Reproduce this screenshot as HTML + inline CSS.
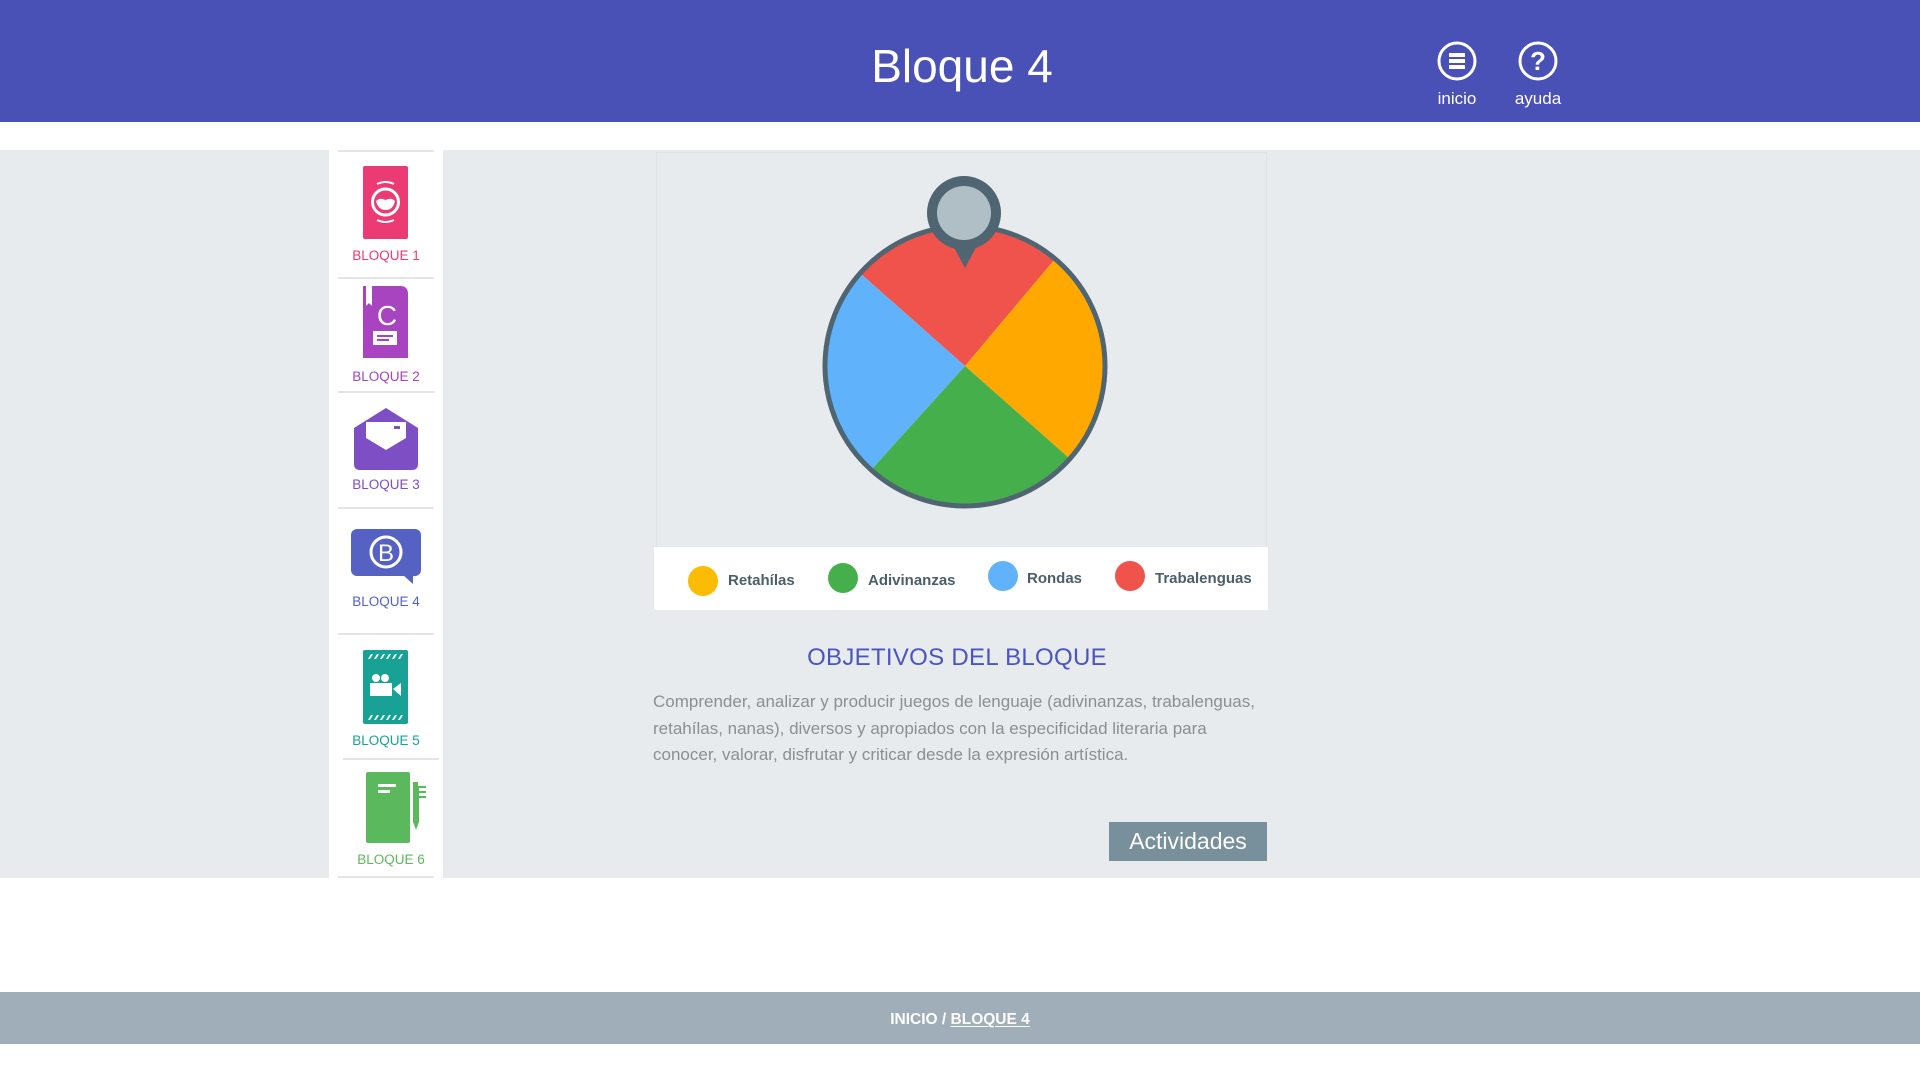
<!DOCTYPE html>
<html><head><meta charset="utf-8">
<style>
*{margin:0;padding:0;box-sizing:border-box}
body{width:1920px;height:1080px;background:#fff;font-family:"Liberation Sans",sans-serif;position:relative;overflow:hidden}
.hdr{position:absolute;left:0;top:0;width:1920px;height:122px;background:#4950b6}
.title{position:absolute;left:0;width:1920px;top:38px;text-align:center;color:#fff;font-size:46px;line-height:56px;padding-left:4px}
.hi{position:absolute;top:40px;width:80px;text-align:center;color:#fff;font-size:17px}
.hi svg{display:block;margin:0 auto 7px}
.main{position:absolute;left:0;top:150px;width:1920px;height:728px;background:#e8ebee}
.side{position:absolute;left:329px;top:150px;width:114px;height:728px;background:#fff}
.sep{position:absolute;left:9px;width:96px;height:2px;background:#e3e6e9}
.lab{position:absolute;left:0;width:114px;text-align:center;font-size:13.5px;line-height:16px}
.ic{position:absolute}
.chart{position:absolute;left:656px;top:152px;width:611px;height:396px;border:1px solid #dfe3e6;background:#e8ebee}
.leg{position:absolute;left:654px;top:547px;width:614px;height:63px;background:#fff}
.dot{position:absolute;width:30px;height:30px;border-radius:50%;top:16px}
.lt{position:absolute;top:25px;font-size:15px;font-weight:bold;color:#4c5e69}
h2{position:absolute;left:653px;width:608px;top:644px;text-align:center;font-weight:normal;color:#4a55be;font-size:24px;letter-spacing:0.3px}
.p{position:absolute;left:653px;top:689px;color:#8c8f92;font-size:17px;line-height:26.5px;white-space:nowrap}
.btn{position:absolute;left:1109px;top:822px;width:158px;height:39px;background:#78909c;color:#fff;font-size:23px;line-height:39px;text-align:center}
.ftr{position:absolute;left:0;top:992px;width:1920px;height:52px;background:#a0aeb9;color:#fff;font-size:15.5px;font-weight:bold;text-align:center;line-height:56px}
.ftr u{text-underline-offset:2px}
</style></head><body>
<div class="hdr">
<div class="title">Bloque 4</div>
<div class="hi" style="left:1417px"><svg width="42" height="42" viewBox="0 0 42 42"><circle cx="21" cy="21" r="18" fill="none" stroke="#fff" stroke-width="3"/><rect x="13" y="13" width="16" height="4" fill="#fff"/><rect x="13" y="19" width="16" height="4" fill="#fff"/><rect x="13" y="25" width="16" height="4" fill="#fff"/></svg>inicio</div>
<div class="hi" style="left:1498px"><svg width="42" height="42" viewBox="0 0 42 42"><circle cx="21" cy="21" r="18" fill="none" stroke="#fff" stroke-width="3"/><text x="21" y="30" text-anchor="middle" fill="#fff" font-size="26" font-weight="bold" font-family="Liberation Sans">?</text></svg>ayuda</div>
</div>
<div class="main"></div>
<div class="side">
<div class="sep" style="top:0"></div>
<svg class="ic" style="left:34px;top:16px" width="45" height="73" viewBox="0 0 45 73"><rect width="45" height="73" rx="2" fill="#ec3a74"/><circle cx="22.5" cy="36" r="13" fill="none" stroke="#fff" stroke-width="3"/><path d="M13 35 Q17 31 22.5 34 Q28 31 32 35 Q30 44 22.5 44 Q15 44 13 35Z" fill="#fff"/><path d="M14 18 Q22.5 14 31 18 M14 54 Q22.5 58 31 54" stroke="#fff" stroke-width="2" fill="none"/></svg>
<div class="lab" style="top:98px;color:#ec3a74">BLOQUE 1</div>
<div class="sep" style="top:127px"></div>
<svg class="ic" style="left:34px;top:136px" width="45" height="72" viewBox="0 0 45 72"><path d="M0 0H37Q45 0 45 8V72H0Z" fill="#a844c0"/><path d="M3 0H9V20L6 17L3 20Z" fill="#fff"/><text x="24" y="39" text-anchor="middle" fill="#fff" font-size="28" font-family="Liberation Sans">C</text><rect x="10" y="45" width="24" height="14" fill="#fff"/><rect x="14" y="49" width="16" height="2" fill="#a844c0"/><rect x="14" y="53" width="12" height="2" fill="#a844c0"/></svg>
<div class="lab" style="top:219px;color:#a844c0">BLOQUE 2</div>
<div class="sep" style="top:241px"></div>
<svg class="ic" style="left:25px;top:258px" width="64" height="62" viewBox="0 0 64 62"><path d="M0 20L32 0L64 20V56Q64 62 58 62H6Q0 62 0 56Z" fill="#7e4ec4"/><path d="M12 14H52V30L32 42L12 30Z" fill="#fff"/><rect x="40" y="18" width="6" height="3" fill="#7e4ec4"/></svg>
<div class="lab" style="top:327px;color:#7e4ec4">BLOQUE 3</div>
<div class="sep" style="top:357px"></div>
<svg class="ic" style="left:22px;top:379px" width="70" height="55" viewBox="0 0 70 55"><rect width="70" height="47" rx="6" fill="#5562c4"/><path d="M52 46H62L62 55Z" fill="#5562c4"/><circle cx="35" cy="23" r="15" fill="none" stroke="#fff" stroke-width="3"/><text x="35" y="32" text-anchor="middle" fill="#fff" font-size="24" font-family="Liberation Sans">B</text></svg>
<div class="lab" style="top:444px;color:#5562c4">BLOQUE 4</div>
<div class="sep" style="top:483px"></div>
<svg class="ic" style="left:34px;top:500px" width="45" height="74" viewBox="0 0 45 74"><rect width="45" height="74" rx="2" fill="#17a295"/><path d="M5 9l3-5h2l-3 5zM11 9l3-5h2l-3 5zM17 9l3-5h2l-3 5zM23 9l3-5h2l-3 5zM29 9l3-5h2l-3 5zM35 9l3-5h2l-3 5zM5 70l3-5h2l-3 5zM11 70l3-5h2l-3 5zM17 70l3-5h2l-3 5zM23 70l3-5h2l-3 5zM29 70l3-5h2l-3 5zM35 70l3-5h2l-3 5z" fill="#fff"/><circle cx="13" cy="28" r="4" fill="#fff"/><circle cx="22" cy="28" r="4" fill="#fff"/><rect x="7" y="33" width="22" height="13" fill="#fff"/><path d="M30 39L38 33V46Z" fill="#fff"/></svg>
<div class="lab" style="top:583px;color:#17a295">BLOQUE 5</div>
<div class="sep" style="top:608px;left:14px"></div>
<svg class="ic" style="left:37px;top:622px" width="62" height="72" viewBox="0 0 62 72"><rect width="44" height="71" rx="2" fill="#5cb85c"/><rect x="12" y="12" width="18" height="3" fill="#fff"/><rect x="12" y="18" width="12" height="3" fill="#fff"/><path d="M47 10H52V14H60V16H53V19H60V21H53V24H60V26H53V50L50 58L47 50Z" fill="#5cb85c"/></svg>
<div class="lab" style="top:702px;left:5px;color:#5cb85c">BLOQUE 6</div>
<div class="sep" style="top:726px"></div>
</div>
<div class="chart"></div>
<svg style="position:absolute;left:0;top:0" width="1920" height="620">
<path d="M965 366L860 273A140 140 0 0 1 1055 259Z" fill="#f0524c"/>
<path d="M965 366L1055 259A140 140 0 0 1 1070 459Z" fill="#ffa800"/>
<path d="M965 366L1070 459A140 140 0 0 1 871 470Z" fill="#45b04b"/>
<path d="M965 366L871 470A140 140 0 0 1 860 273Z" fill="#60b3fa"/>
<circle cx="965" cy="366" r="140" fill="none" stroke="#4f6672" stroke-width="5"/>
<path d="M950 240L965 268L980 240Z" fill="#4f6672"/>
<circle cx="964" cy="213" r="37" fill="#4f6672"/>
<circle cx="964" cy="213" r="27" fill="#b0bec5"/>
</svg>
<div class="leg">
<div class="dot" style="left:34px;top:19px;background:#fcbc04"></div><div class="lt" style="left:74px">Retahílas</div>
<div class="dot" style="left:174px;background:#45b04b"></div><div class="lt" style="left:214px">Adivinanzas</div>
<div class="dot" style="left:334px;top:14px;background:#60b3fa"></div><div class="lt" style="left:373px;top:23px">Rondas</div>
<div class="dot" style="left:461px;top:14px;background:#f0524c"></div><div class="lt" style="left:501px;top:23px">Trabalenguas</div>
</div>
<h2>OBJETIVOS DEL BLOQUE</h2>
<div class="p">Comprender, analizar y producir juegos de lenguaje (adivinanzas, trabalenguas,<br>retahílas, nanas), diversos y apropiados con la especificidad literaria para<br>conocer, valorar, disfrutar y criticar desde la expresión artística.</div>
<div class="btn">Actividades</div>
<div class="ftr">INICIO / <u>BLOQUE 4</u></div>
</body></html>
